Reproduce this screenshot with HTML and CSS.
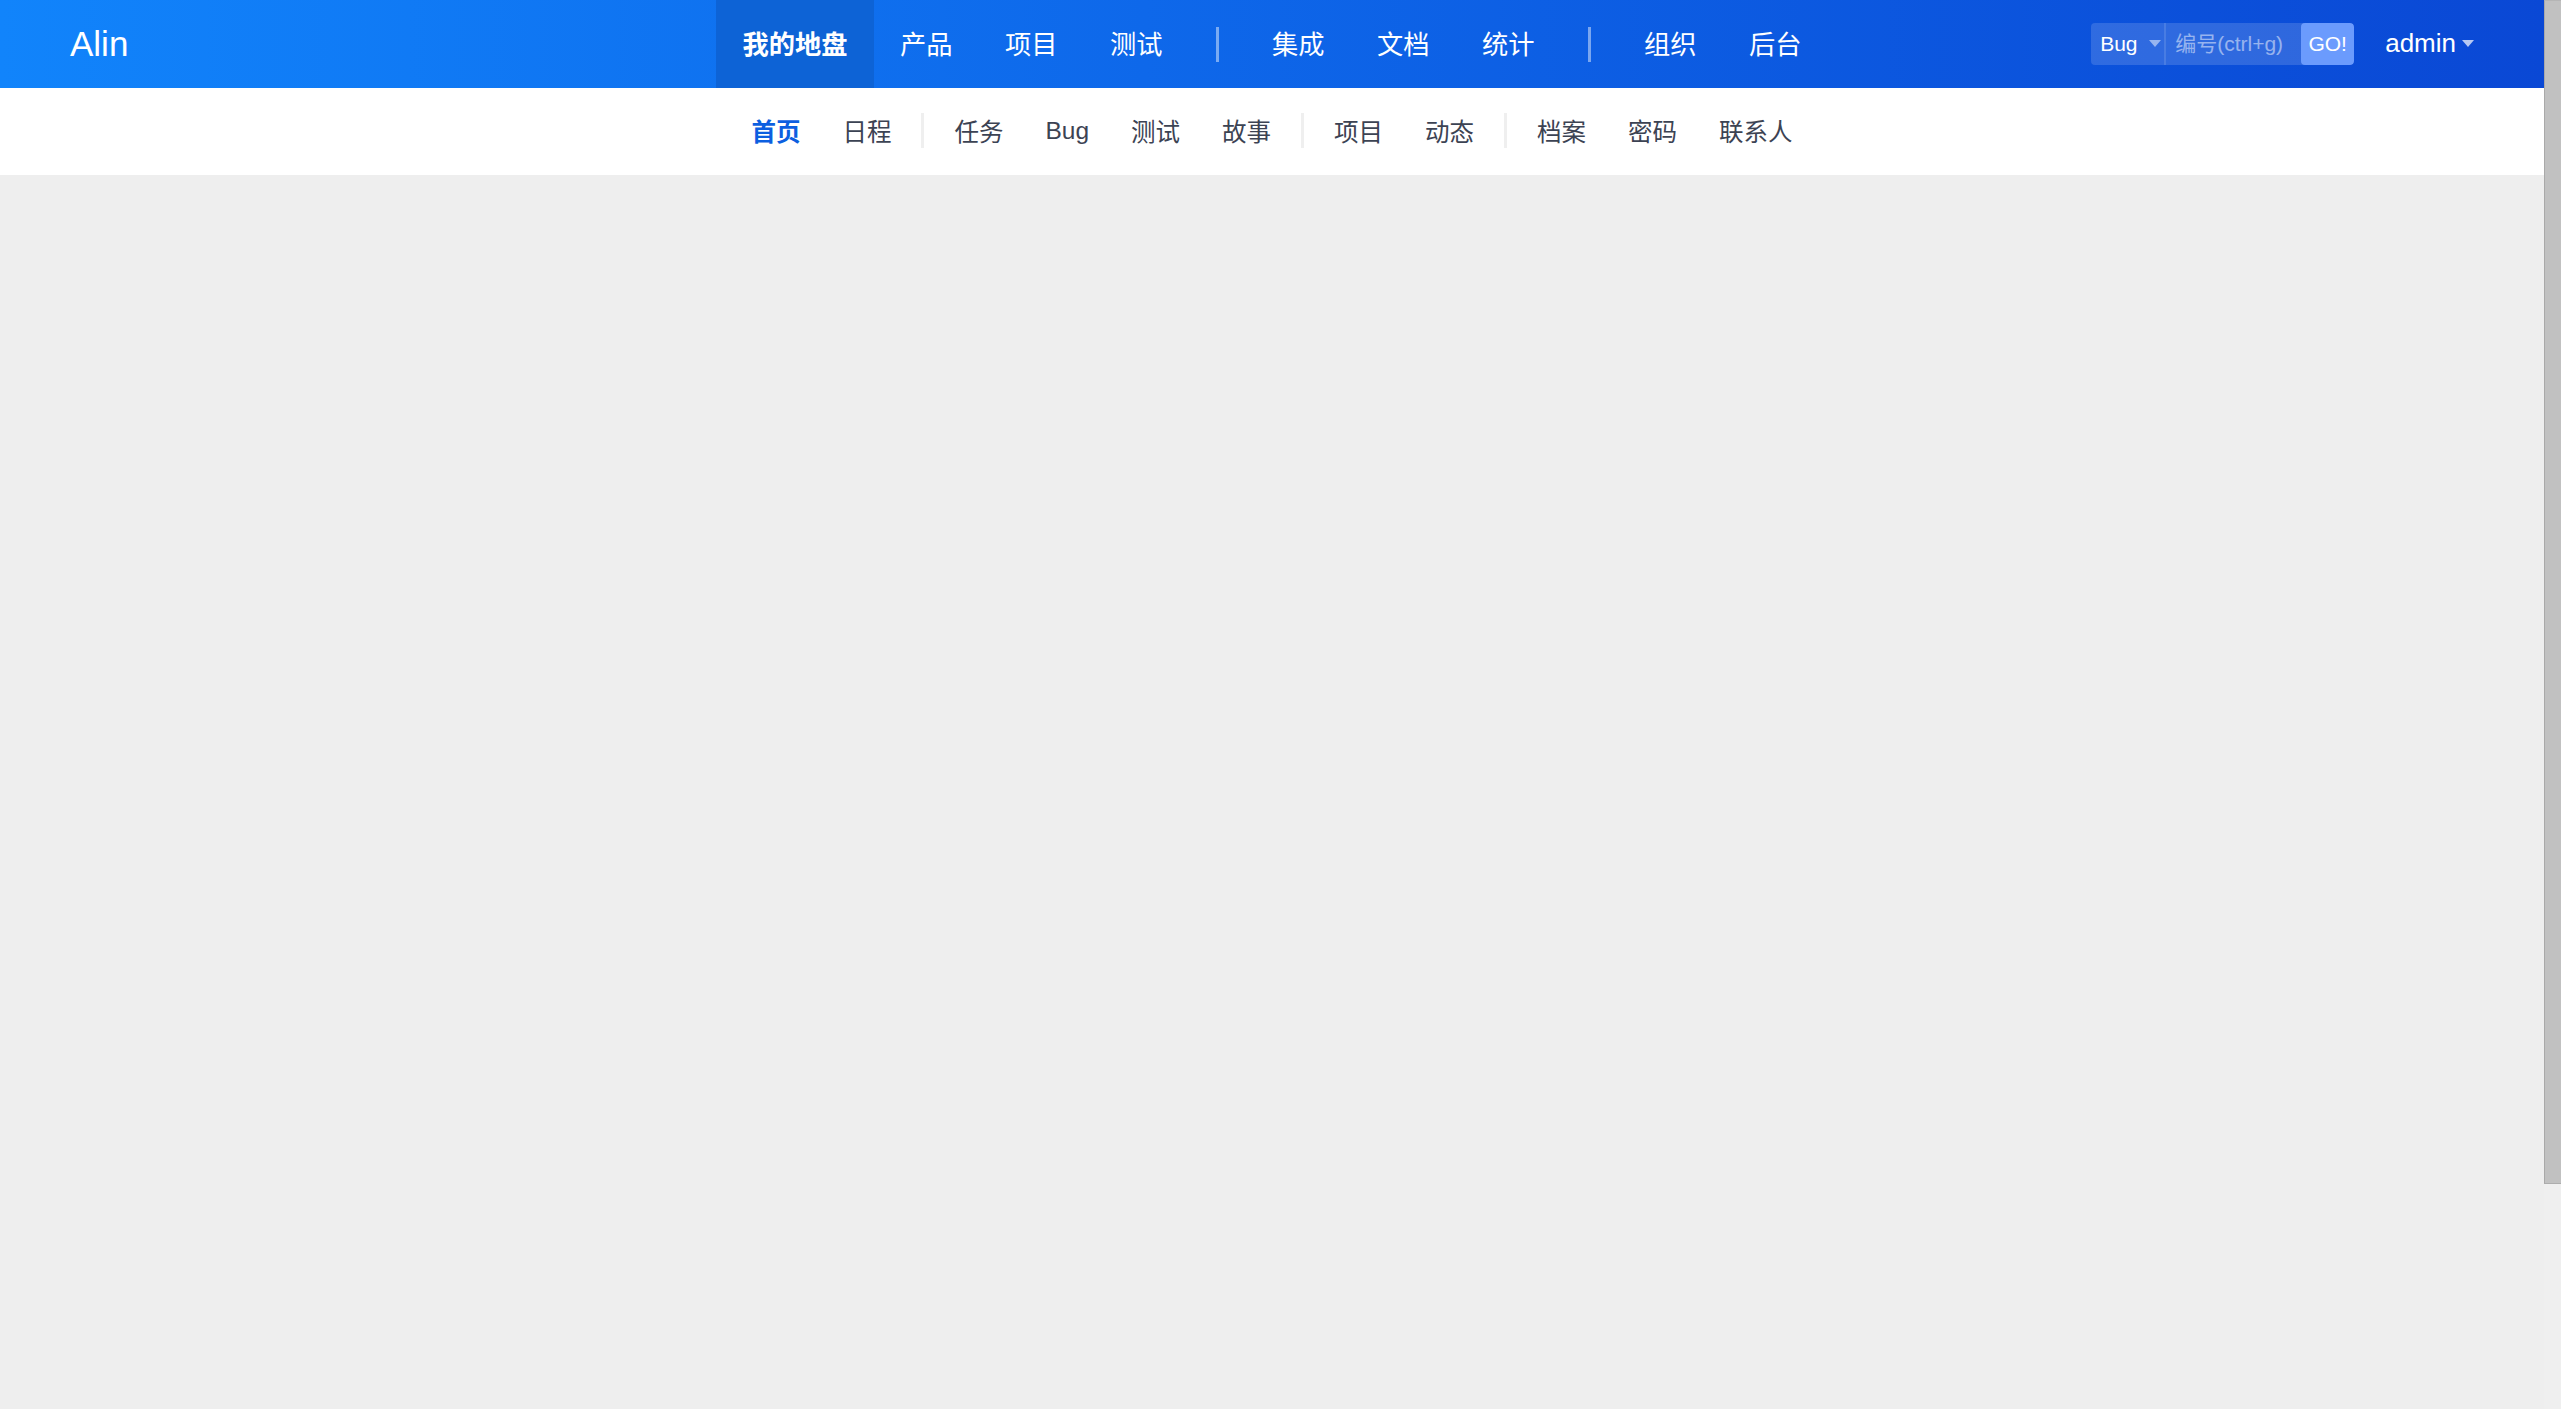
FILE: index.html
```html
<!DOCTYPE html>
<html lang="zh-CN">
<head>
<meta charset="utf-8">
<title>我的地盘 - Alin</title>
<link rel="stylesheet" href="styles.css">
</head>
<body>
<div class="page">
  <header class="topbar">
    <div class="brand">Alin</div>
    <nav class="mainnav">
      <a class="nav-item active">我的地盘</a>
      <a class="nav-item">产品</a>
      <a class="nav-item">项目</a>
      <a class="nav-item">测试</a>
      <span class="nav-divider"></span>
      <a class="nav-item">集成</a>
      <a class="nav-item">文档</a>
      <a class="nav-item">统计</a>
      <span class="nav-divider"></span>
      <a class="nav-item">组织</a>
      <a class="nav-item">后台</a>
    </nav>
    <div class="tools">
      <div class="search">
        <div class="search-type">Bug<span class="caret"></span></div>
        <input class="search-input" type="text" placeholder="编号(ctrl+g)">
        <button class="search-go" type="button">GO!</button>
      </div>
      <a class="user">admin<span class="caret user-caret"></span></a>
    </div>
  </header>
  <nav class="subnav">
    <a class="sub-item active">首页</a>
    <a class="sub-item">日程</a>
    <span class="sub-divider"></span>
    <a class="sub-item">任务</a>
    <a class="sub-item">Bug</a>
    <a class="sub-item">测试</a>
    <a class="sub-item">故事</a>
    <span class="sub-divider"></span>
    <a class="sub-item">项目</a>
    <a class="sub-item">动态</a>
    <span class="sub-divider"></span>
    <a class="sub-item">档案</a>
    <a class="sub-item">密码</a>
    <a class="sub-item">联系人</a>
  </nav>
  <main class="content"></main>
</div>
<div class="scrollbar"><div class="scrollbar-thumb"></div></div>
</body>
</html>
```
FILE: styles.css
```css
html, body {
  margin: 0;
  padding: 0;
  height: 100%;
  overflow: hidden;
}
body {
  display: flex;
  background: #eeeeee;
  font-family: "Liberation Sans", "Noto Sans CJK SC", sans-serif;
  color: #3c4353;
}
.page {
  flex: 1;
  min-width: 0;
  display: flex;
  flex-direction: column;
}
.scrollbar {
  width: 17px;
  flex: none;
  background: #efefef;
}
.scrollbar-thumb {
  height: 1184px;
  box-sizing: border-box;
  background: #c1c1c1;
  border-left: 1px solid #a9a9a9;
  border-bottom: 1px solid #adadad;
  border-top: 1px solid #b5b5b5;
}

.topbar {
  height: 88px;
  flex: none;
  display: grid;
  grid-template-columns: 1fr auto 1fr;
  align-items: stretch;
  background: linear-gradient(90deg, #1184fb 0%, #0e68ea 45%, #0a48d5 100%);
  color: #ffffff;
}
.brand {
  display: flex;
  align-items: center;
  padding-left: 70px;
  font-size: 35px;
  line-height: 1;
  padding-bottom: 2px;
}
.mainnav {
  display: flex;
  align-items: center;
}
.nav-item {
  height: 88px;
  box-sizing: border-box;
  display: flex;
  align-items: center;
  padding: 0 26.25px 3px;
  font-size: 26.25px;
  color: #ffffff;
  cursor: pointer;
}
.nav-item.active {
  background: #0d63d6;
  font-weight: bold;
}
.nav-divider {
  width: 3px;
  height: 35px;
  margin: 0 27px;
  background: rgba(255, 255, 255, 0.45);
}
.tools {
  display: flex;
  align-items: center;
  justify-content: flex-end;
  padding-right: 70px;
  padding-bottom: 1px;
}
.search {
  display: flex;
  height: 42px;
  border-radius: 4px;
  overflow: hidden;
  background: rgba(255, 255, 255, 0.15);
}
.search-type {
  width: 75px;
  box-sizing: border-box;
  display: flex;
  align-items: center;
  padding-left: 9px;
  font-size: 21px;
  color: #ffffff;
  border-right: 2px solid rgba(255, 255, 255, 0.12);
}
.caret {
  display: inline-block;
  width: 0;
  height: 0;
  border-top: 7px solid rgba(255, 255, 255, 0.5);
  border-left: 6.5px solid transparent;
  border-right: 6.5px solid transparent;
  margin-left: 11px;
}
.search-input {
  width: 135px;
  box-sizing: border-box;
  border: 0;
  outline: 0;
  background: transparent;
  padding: 0 0 0 9px;
  font-family: "Liberation Sans", "Noto Sans CJK SC", sans-serif;
  font-size: 21px;
  color: #ffffff;
}
.search-input::placeholder {
  color: rgba(255, 255, 255, 0.5);
}
.search-go {
  width: 53px;
  border: 0;
  padding: 0;
  border-radius: 4px;
  background: #6b9bfd;
  color: #ffffff;
  font-family: "Liberation Sans", sans-serif;
  font-size: 21px;
}
.user {
  display: flex;
  align-items: center;
  margin-left: 31px;
  font-size: 26px;
  color: #ffffff;
  cursor: pointer;
}
.user-caret {
  margin-left: 6px;
  border-top-color: rgba(255, 255, 255, 0.7);
}

.subnav {
  height: 87px;
  flex: none;
  box-sizing: border-box;
  display: flex;
  justify-content: center;
  align-items: center;
  padding-bottom: 2px;
  background: #ffffff;
}
.sub-item {
  padding: 0 21px;
  font-size: 24.5px;
  color: #3c4353;
  cursor: pointer;
}
.sub-item.active {
  color: #0c5fe0;
  font-weight: bold;
}
.sub-divider {
  width: 3px;
  height: 35px;
  margin: 0 9px;
  background: #efefef;
}
.content {
  flex: 1;
}
```
